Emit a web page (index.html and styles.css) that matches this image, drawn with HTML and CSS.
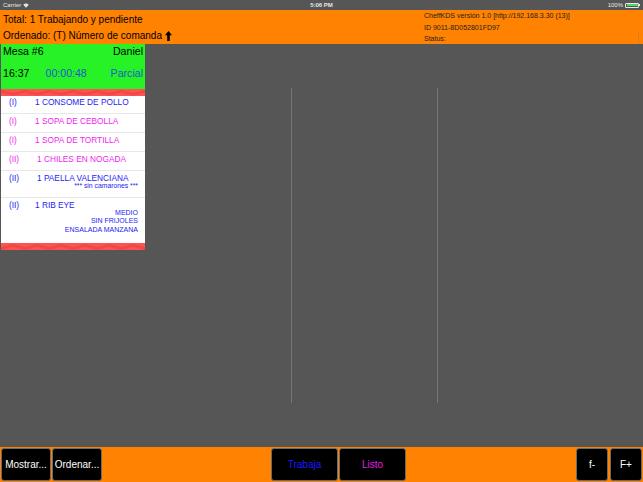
FILE: index.html
```html
<!DOCTYPE html>
<html lang="es">
<head>
<meta charset="utf-8">
<title>CheffKDS</title>
<link rel="stylesheet" href="styles.css">
</head>
<body>
<div class="status">
  <div class="sb-left">Carrier
    <svg class="wifi" width="6" height="5" viewBox="0 0 12 10"><path d="M6 9.5 L0.5 3.5 A8 8 0 0 1 11.5 3.5 Z" fill="#e6e6e6"/></svg>
  </div>
  <div class="sb-center">5:06 PM</div>
  <div class="sb-right">100% <span class="battery"><span class="battery-fill"></span></span><span class="battery-tip"></span></div>
</div>

<header class="top">
  <div class="top-left">
    <div class="top-line">Total: 1 Trabajando y pendiente</div>
    <div class="top-line">Ordenado: (T) Número de comanda
      <svg class="arrow" width="7" height="10" viewBox="0 0 7 10"><path d="M3.5 0 L7 4.2 L4.8 4.2 L4.8 10 L2.2 10 L2.2 4.2 L0 4.2 Z" fill="#000"/></svg>
    </div>
  </div>
  <div class="top-right">
    <div>CheffKDS versión 1.0 [http://192.168.3.30 (13)]</div>
    <div>ID 9011-8D052801FD97</div>
    <div>Status:</div>
  </div>
  <span class="scroll-ind"></span>
</header>

<main class="board">
  <section class="col col-first">
    <div class="card">
      <div class="card-head">
        <div class="head-row"><span>Mesa #6</span><span>Daniel</span></div>
        <div class="head-row row-time"><span>16:37</span><span class="elapsed">00:00:48</span><span class="state">Parcial</span></div>
      </div>
      <svg class="band" width="144" height="7" viewBox="0 0 144 7">
        <defs>
          <pattern id="zz-top" width="24" height="7" patternUnits="userSpaceOnUse">
            <rect width="24" height="7" fill="#ff5252"/>
            <path d="M0 1.5 L12 4.5 L24 1.5" stroke="#e23a3a" stroke-width="0.6" fill="none"/>
            <path d="M0 2.5 L12 5.5 L24 2.5" stroke="#e23a3a" stroke-width="0.6" fill="none"/>
            <path d="M0 3.5 L12 6.5 L24 3.5" stroke="#e84444" stroke-width="0.5" fill="none"/>
          </pattern>
        </defs>
        <rect width="144" height="7" fill="url(#zz-top)"/>
      </svg>
      <ul class="items">
        <li class="item blue first"><span class="lvl">(I)</span><span>1 CONSOME DE POLLO</span></li>
        <li class="item pink"><span class="lvl">(I)</span><span>1 SOPA DE CEBOLLA</span></li>
        <li class="item pink"><span class="lvl">(I)</span><span>1 SOPA DE TORTILLA</span></li>
        <li class="item pink"><span class="lvl lvl-two">(II)</span><span>1 CHILES EN NOGADA</span></li>
        <li class="item blue">
          <div class="item-line"><span class="lvl lvl-two">(II)</span><span>1 PAELLA VALENCIANA</span></div>
          <div class="notes"><div class="note-small">*** sin camarones ***</div></div>
        </li>
        <li class="item blue last">
          <div class="item-line"><span class="lvl">(II)</span><span>1 RIB EYE</span></div>
          <div class="notes"><div>MEDIO</div><div>SIN FRIJOLES</div><div>ENSALADA MANZANA</div></div>
        </li>
      </ul>
      <svg class="band" width="144" height="7" viewBox="0 0 144 7">
        <defs>
          <pattern id="zz-bot" width="24" height="7" patternUnits="userSpaceOnUse">
            <rect width="24" height="7" fill="#ff5252"/>
            <path d="M0 5 L12 1.5 L24 5" stroke="#e23a3a" stroke-width="0.6" fill="none"/>
            <path d="M0 6 L12 2.5 L24 6" stroke="#e23a3a" stroke-width="0.6" fill="none"/>
            <path d="M0 7 L12 3.5 L24 7" stroke="#e84444" stroke-width="0.5" fill="none"/>
          </pattern>
        </defs>
        <rect width="144" height="7" fill="url(#zz-bot)"/>
      </svg>
    </div>
  </section>
  <section class="col col-ruled"><div class="rule"></div></section>
  <section class="col col-ruled"><div class="rule"></div></section>
  <section class="col"></section>
</main>

<footer class="bottom">
  <div class="group">
    <button class="btn btn-wide">Mostrar...</button>
    <button class="btn btn-wide">Ordenar...</button>
  </div>
  <div class="group group-mid">
    <button class="btn btn-mid text-blue">Trabaja</button>
    <button class="btn btn-mid text-pink">Listo</button>
  </div>
  <div class="group group-right">
    <button class="btn btn-small">f-</button>
    <button class="btn btn-small">F+</button>
  </div>
</footer>
</body>
</html>
```

FILE: styles.css
```css
* { box-sizing: border-box; }

html, body {
  margin: 0;
  padding: 0;
}

body {
  width: 643px;
  height: 482px;
  overflow: hidden;
  background: #565656;
  font-family: "Liberation Sans", Arial, sans-serif;
  color: #000;
}

/* status bar */
.status {
  height: 10px;
  display: flex;
  align-items: center;
  justify-content: space-between;
  padding: 0 3px 0 3px;
  font-size: 6px;
  color: #e6e6e6;
  position: relative;
}
.sb-left { display: flex; align-items: center; gap: 2px; }
.sb-center {
  position: absolute;
  left: 0;
  right: 0;
  text-align: center;
  font-weight: bold;
}
.sb-right { display: flex; align-items: center; gap: 2px; }
.battery {
  width: 14px;
  height: 5px;
  border: 0.5px solid #e6e6e6;
  border-radius: 1px;
  padding: 0.5px;
  display: flex;
}
.battery-fill { flex: 1; background: #4cd964; border-radius: 0.5px; }
.battery-tip { width: 1px; height: 2px; background: #e6e6e6; margin-left: -2px; }

/* orange header */
.top {
  height: 34px;
  background: #ff8200;
  display: flex;
  justify-content: space-between;
  position: relative;
}
.top-left {
  padding: 2px 0 0 3px;
  font-size: 10px;
}
.top-line {
  height: 16px;
  line-height: 14px;
  display: flex;
  align-items: center;
  gap: 3px;
}
.arrow { margin-top: -1px; }
.top-right {
  width: 219px;
  padding-top: 0;
  font-size: 7px;
  line-height: 11.5px;
  color: #1e1e1e;
}
.scroll-ind {
  position: absolute;
  right: 4px;
  top: 21px;
  width: 1px;
  height: 13px;
  background: #e07a1a;
}

/* board */
.board {
  height: 403px;
  display: flex;
}
.col {
  width: 146px;
  flex: none;
}
.col-first { padding-left: 1px; }
.col-ruled { padding: 44px 0; }
.rule {
  height: 100%;
  border-right: 1px solid #767676;
}

.card {
  width: 144px;
  background: #fff;
}
.card-head {
  background: #26f226;
  height: 45px;
  padding: 1px 2px 0 2px;
  font-size: 10.6px;
}
.head-row {
  display: flex;
  justify-content: space-between;
  line-height: 12px;
}
.row-time { margin-top: 10px; justify-content: flex-start; }
.elapsed { margin-left: 16px; color: #2058d0; }
.state { margin-left: auto; color: #2058d0; }
.band { display: block; }

.items {
  list-style: none;
  margin: 0;
  padding: 0;
  font-size: 8.3px;
}
.item {
  padding: 1px 7px 5px 8px;
  line-height: 12px;
  border-bottom: 1px solid #e8e8e8;
  display: flex;
  flex-direction: column;
}
.item:not(:has(.item-line)) { flex-direction: row; }
.item.first { padding-top: 0; }
.item.last { border-bottom: none; padding-bottom: 8px; }
.item-line { display: flex; }
.lvl { width: 26px; flex: none; }
.lvl-two { width: 28px; }
.blue { color: #2424f0; }
.pink { color: #f024f0; }

.notes {
  margin-top: -2px;
  margin-bottom: 1px;
  text-align: right;
  font-size: 7px;
  line-height: 8.5px;
}
.note-small { font-size: 6.8px; }

/* bottom bar */
.bottom {
  height: 35px;
  background: #ff8200;
  display: flex;
  padding: 1px 1px 1px 1px;
}
.group { display: flex; gap: 1px; }
.group-mid { margin-left: 169px; gap: 1px; }
.group-right { margin-left: auto; gap: 2px; }
.btn {
  height: 33px;
  background: #000;
  color: #fff;
  border: 1px solid #6a6a6a;
  border-radius: 3px;
  font-family: "Liberation Sans", Arial, sans-serif;
  font-size: 10px;
  padding: 0;
  margin: 0;
}
.btn-wide { width: 50px; }
.btn-mid { width: 67px; }
.btn-small { width: 32px; }
.text-blue { color: #1a1aff; }
.text-pink { color: #e020e0; }
```
